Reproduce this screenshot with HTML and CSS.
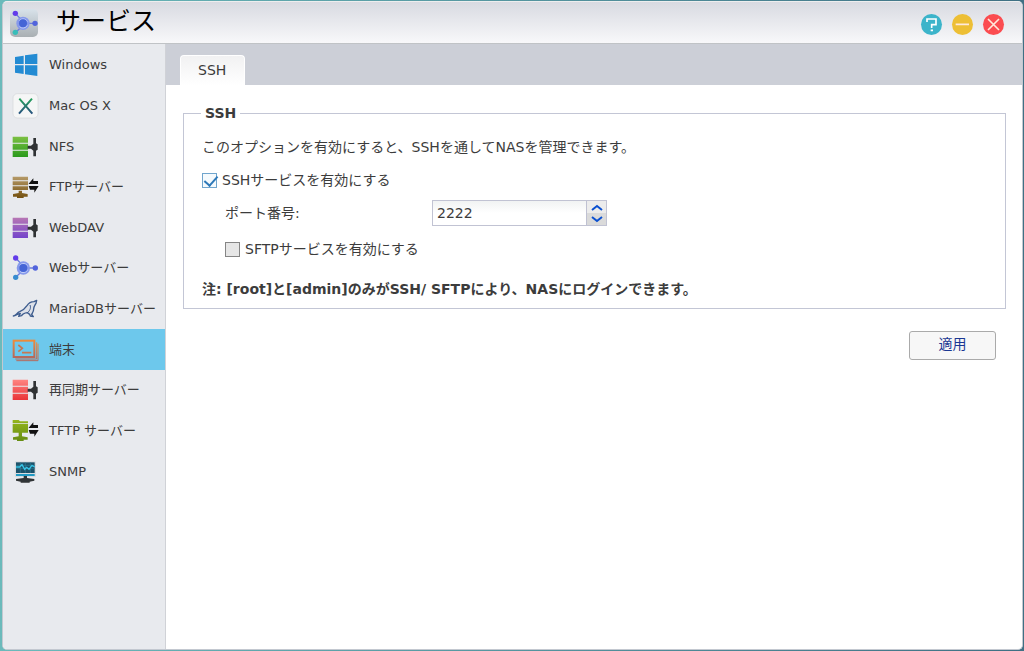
FILE: index.html
```html
<!DOCTYPE html>
<html lang="ja">
  <head>
    <meta charset="utf-8" />
    <meta name="viewport" content="width=device-width, initial-scale=1" />
    <title>サービス</title>
    <link rel="stylesheet" href="styles.css" />
  </head>
  <body>
    <!-- shared gradients and icon parts -->
    <svg class="defs" aria-hidden="true">
      <defs>
        <linearGradient id="green" x2="0" y2="1">
          <stop offset="0" stop-color="#7cc043" />
          <stop offset="1" stop-color="#2a9a1c" />
        </linearGradient>
        <linearGradient id="brown" x2="0" y2="1">
          <stop offset="0" stop-color="#b59a68" />
          <stop offset="1" stop-color="#74500f" />
        </linearGradient>
        <linearGradient id="purple" x2="0" y2="1">
          <stop offset="0" stop-color="#b777b4" />
          <stop offset="1" stop-color="#7444cb" />
        </linearGradient>
        <linearGradient id="red" x2="0" y2="1">
          <stop offset="0" stop-color="#ff8582" />
          <stop offset="1" stop-color="#e93438" />
        </linearGradient>
        <linearGradient id="olive" x2="0" y2="1">
          <stop offset="0" stop-color="#94b51c" />
          <stop offset="1" stop-color="#668d12" />
        </linearGradient>
        <linearGradient id="term" x2="0" y2="1">
          <stop offset="0" stop-color="#ee8b3a" />
          <stop offset="1" stop-color="#b5695c" />
        </linearGradient>
        <linearGradient id="osx" gradientUnits="userSpaceOnUse" x1="0" y1="18" x2="0" y2="62">
          <stop offset="0" stop-color="#25a05c" />
          <stop offset="1" stop-color="#27517f" />
        </linearGradient>
        <linearGradient id="tile" x2="0" y2="1">
          <stop offset="0" stop-color="#d8e2ea" />
          <stop offset="1" stop-color="#a9afb3" />
        </linearGradient>
        <symbol id="plug" viewBox="0 0 84 78">
          <path d="M50 35h10l7-6V12h8v16l5 3v16l-5 3v17h-8V50l-7-6H50z" fill="#2f3234" />
        </symbol>
        <symbol id="arrows" viewBox="0 0 84 78">
          <path d="M53 29l14-16v8h14v9H53zM53 36h30L70 56v-9H57z" fill="#111" />
        </symbol>
        <symbol id="hub" viewBox="0 0 84 78">
          <path d="M14 9l17 18M37 39h36M14 67l19-18" stroke="#6b7cdc" stroke-width="4" />
          <circle cx="37" cy="39" r="20" fill="#8699eb" />
          <path d="M26 31a14 14 0 0 1 24 3M50 44a14 14 0 0 1-23 5" stroke="#c3d0f8" stroke-width="3" fill="none" />
          <circle cx="37" cy="39" r="12" fill="#4565d6" />
          <circle cx="14" cy="9" r="8" fill="#623cea" />
          <circle cx="73" cy="39" r="8" fill="#5264dc" />
        </symbol>
      </defs>
    </svg>

    <div class="window">
      <header class="titlebar">
        <svg class="app-icon" viewBox="0 0 84 84" aria-hidden="true">
          <rect width="84" height="84" rx="15" fill="url(#tile)" />
          <use href="#hub" x="2" y="4" width="84" height="78" />
          <circle cx="16" cy="70" r="8" fill="#38bdb9" />
        </svg>
        <h1>サービス</h1>
        <div class="controls">
          <button type="button" class="control help" aria-label="ヘルプ">
            <svg viewBox="0 0 63 63"><path d="M18 24v-9h27v17H32v10M29 49h7" stroke-width="5" /></svg>
          </button>
          <button type="button" class="control minimize" aria-label="最小化">
            <svg viewBox="0 0 63 63"><path d="M11 31h40" stroke-width="5" /></svg>
          </button>
          <button type="button" class="control close" aria-label="閉じる">
            <svg viewBox="0 0 63 63"><path d="M15 15l33 33M48 15L15 48" stroke-width="5" /></svg>
          </button>
        </div>
      </header>

      <div class="body">
        <nav class="sidebar">
          <ul>
            <li><a href="#windows">
              <svg viewBox="0 0 84 78"><path d="M12 15l26-4v25H12zM42 10l37-5v31H42zM12 40h26v26l-26-4zM42 40h37v32l-37-5z" fill="#238bd3" /></svg>
              Windows</a></li>
            <li><a href="#mac">
              <svg viewBox="0 0 84 78">
                <rect x="6" y="2" width="75" height="73" rx="13" fill="#f5f6f6" stroke="#d5d6d9" stroke-width="2" />
                <path d="M25 17l39 45M63 17L24 62" stroke="url(#osx)" stroke-width="6" />
              </svg>
              Mac OS X</a></li>
            <li><a href="#nfs">
              <svg viewBox="0 0 84 78">
                <path d="M5 8h46v18H5zM5 29h46v18H5zM5 50h46v19H5z" fill="url(#green)" />
                <use href="#plug" />
              </svg>
              NFS</a></li>
            <li><a href="#ftp">
              <svg viewBox="0 0 84 78">
                <path d="M5 8h46v11H5zM5 22h46v12H5zM5 37h46v11H5zM23 50h10v7l17 3v8H38v4H18v-4H6v-8l17-3z" fill="url(#brown)" />
                <use href="#arrows" />
              </svg>
              FTPサーバー</a></li>
            <li><a href="#webdav">
              <svg viewBox="0 0 84 78">
                <path d="M5 8h46v18H5zM5 29h46v18H5zM5 50h46v19H5z" fill="url(#purple)" />
                <use href="#plug" />
              </svg>
              WebDAV</a></li>
            <li><a href="#web">
              <svg viewBox="0 0 84 78">
                <use href="#hub" />
                <circle cx="14" cy="67" r="8" fill="#388cd0" />
              </svg>
              Webサーバー</a></li>
            <li><a href="#mariadb">
              <svg viewBox="0 0 84 78" fill="none" stroke="#3d5c8e" stroke-width="4" stroke-linejoin="round">
                <path d="M7 60c9-1 10-10 19-13 11-4 16-9 22-18 5-8 13-12 21-12l8-4-2 9c-4 7-7 10-7 17 0 8-4 12-6 16l5 7-9-2-2-5-7-5c-8 1-14 3-17 9l-9 2 5-9c-9 1-13 8-21 8z" fill="#dde1e9" />
                <path d="M57 27c4 9-1 18-8 23" stroke-width="3" />
              </svg>
              MariaDBサーバー</a></li>
            <li class="selected"><a href="#terminal" aria-current="page">
              <svg viewBox="0 0 84 78" fill="none" stroke="url(#term)">
                <rect x="8" y="11" width="62" height="49" stroke-width="6" />
                <path d="M13 66h64V16M16 71h65V20" stroke-width="3" />
                <path d="M22 24l12 10-12 10M33 47h28" stroke-width="5" stroke="#c8774f" />
              </svg>
              端末</a></li>
            <li><a href="#rsync">
              <svg viewBox="0 0 84 78">
                <path d="M5 8h46v18H5zM5 29h46v18H5zM5 50h46v19H5z" fill="url(#red)" />
                <use href="#plug" />
              </svg>
              再同期サーバー</a></li>
            <li><a href="#tftp">
              <svg viewBox="0 0 84 78">
                <path d="M5 6h18l4 4h24v6H5zM5 18h46v26H5zM23 44h10v11l17 3v7H38v4H18v-4H6v-7l17-3z" fill="url(#olive)" />
                <use href="#arrows" />
              </svg>
              TFTP サーバー</a></li>
            <li><a href="#snmp">
              <svg viewBox="0 0 84 78">
                <rect x="11" y="7" width="64" height="47" rx="3" fill="#d9dcdf" />
                <path d="M15 10h56v32H15z" fill="#1d526a" />
                <path d="M15 19h56M15 29h56M28 10v32M43 10v32M58 10v32" stroke="#327b93" stroke-width="2" />
                <path d="M15 24h11l7-7 8 14 6-6 7 6 9-12 8 5" fill="none" stroke="#38c6e8" stroke-width="4" />
                <path d="M15 45h56v6H15z" fill="#219ac4" />
                <path d="M38 51h10v6l22 3v5l-14 3v3H29v-3l-14-3v-5l23-3z" fill="#303436" />
              </svg>
              SNMP</a></li>
          </ul>
        </nav>

        <main>
          <div class="tabs" role="tablist">
            <button type="button" class="tab" role="tab" aria-selected="true">SSH</button>
          </div>
          <form class="panel">
            <fieldset>
              <legend>SSH</legend>
              <p>このオプションを有効にすると、SSHを通してNASを管理できます。</p>
              <div class="row">
                <input type="checkbox" id="ssh" checked />
                <label for="ssh">SSHサービスを有効にする</label>
              </div>
              <div class="row indent port">
                <label for="port">ポート番号:</label>
                <div class="spinner">
                  <input type="text" inputmode="numeric" id="port" value="2222" />
                  <div class="steps">
                    <button type="button" aria-label="増やす">
                      <svg viewBox="0 0 12 7"><path d="M1 6l5-4 5 4" /></svg>
                    </button>
                    <button type="button" aria-label="減らす">
                      <svg viewBox="0 0 12 7"><path d="M1 1l5 4 5-4" /></svg>
                    </button>
                  </div>
                </div>
              </div>
              <div class="row indent">
                <input type="checkbox" id="sftp" />
                <label for="sftp">SFTPサービスを有効にする</label>
              </div>
              <p class="note">注: [root]と[admin]のみがSSH/ SFTPにより、NASにログインできます。</p>
            </fieldset>
            <div class="actions">
              <button type="button" class="apply">適用</button>
            </div>
          </form>
        </main>
      </div>
    </div>
  </body>
</html>
```
FILE: styles.css
```css
* {
  box-sizing: border-box;
}

body {
  margin: 0;
  padding: 1px 1px 1px 2px;
  height: 100vh;
  background: linear-gradient(to right, #6bbabb, #3f7084);
  color: #3c3c3c;
  font: 14px/20px "DejaVu Sans", "Noto Sans CJK JP", sans-serif;
}

button,
input {
  font: inherit;
  color: inherit;
  margin: 0;
}

.defs {
  position: absolute;
  width: 0;
  height: 0;
}

.window {
  display: flex;
  flex-direction: column;
  height: 100%;
  border: 1px solid #c3c8d0;
  border-top-color: #eee;
  border-radius: 5px;
  background: #fff;
  overflow: hidden;
}

/* title bar */
.titlebar {
  display: flex;
  align-items: center;
  flex: none;
  height: 42px;
  padding: 0 18px 0 7px;
  background: linear-gradient(#d8dae1, #f8f8fa);
  border-bottom: 1px solid #c0c3c6;
}

.app-icon {
  width: 28px;
  height: 28px;
}

h1 {
  margin: 0 auto 8px 18px;
  color: #000;
  font: 25px/32px "Noto Sans CJK JP", sans-serif;
}

.controls {
  display: flex;
  gap: 10px;
  margin-top: 4px;
}

.control {
  width: 21px;
  height: 21px;
  padding: 0;
  border: 0;
  border-radius: 50%;
}

.control svg {
  display: block;
  fill: none;
  stroke: #fff;
}

.help {
  background: #3cb4ca;
}

.minimize {
  background: #edbf35;
}

.close {
  background: #fb4c50;
}

.minimize svg,
.close svg {
  stroke: #ffe9dc;
}

.body {
  display: flex;
  flex: 1;
  min-height: 0;
}

/* service list */
.sidebar {
  flex: none;
  width: 163px;
  padding-top: 1px;
  background: #e8eaee;
  border-right: 1px solid #d0d2d7;
  font-size: 13px;
}

.sidebar ul {
  display: grid;
  grid-template-rows: repeat(11, 1fr);
  height: 447px;
  margin: 0;
  padding: 0;
  list-style: none;
}

.sidebar a {
  display: flex;
  align-items: center;
  gap: 10px;
  height: 100%;
  padding-left: 8px;
  color: inherit;
  text-decoration: none;
  white-space: nowrap;
}

.sidebar a svg {
  flex: none;
  width: 28px;
  height: 26px;
}

.sidebar .selected {
  background: #6dc8ec;
}

main {
  flex: 1;
  min-width: 0;
}

.tabs {
  display: flex;
  align-items: flex-end;
  height: 41px;
  padding-left: 14px;
  background: #cccfd7;
}

.tab {
  height: 30px;
  padding: 0 18px 1px 17px;
  border: 1px solid #fff;
  border-bottom: 0;
  border-radius: 4px 4px 0 0;
  background: linear-gradient(#f1f1f2, #fff);
}

/* settings form */
.panel {
  padding: 18px 16px 0 17px;
}

fieldset {
  margin: 0;
  padding: 14px 18px 9px;
  border: 1px solid #c3c6d5;
}

legend {
  margin-left: -1px;
  padding: 0 4px;
  font-weight: bold;
}

p {
  margin: 0;
}

.row {
  display: flex;
  align-items: center;
  gap: 5px;
  margin-top: 13px;
}

.indent {
  margin-left: 23px;
}

.port {
  margin-top: 10px;
}

.port label {
  width: 202px;
}

input[type="checkbox"] {
  appearance: none;
  width: 15px;
  height: 15px;
  border: 1px solid #858585;
  background: #e6e6e6;
}

input[type="checkbox"]:checked {
  border-color: #70a5cd;
  background: #f5fafd;
}

input[type="checkbox"]:checked::before {
  content: "";
  display: block;
  width: 6px;
  height: 11px;
  margin: -1px 0 0 4px;
  border: solid #2d78b8;
  border-width: 0 2px 2px 0;
  transform: rotate(42deg);
}

.spinner {
  display: flex;
  width: 175px;
  height: 26px;
  border: 1px solid #c1c3d3;
}

.spinner input {
  flex: 1;
  min-width: 0;
  padding: 0 4px;
  border: 0;
  background: linear-gradient(#f1f3f3, #fff 50%);
}

.steps {
  display: flex;
  flex-direction: column;
  width: 20px;
  border-left: 1px solid #bfc1d2;
}

.steps button {
  display: flex;
  flex: 1;
  align-items: center;
  justify-content: center;
  padding: 0;
  border: 0;
  background: #ececec;
}

.steps button + button {
  background: #dadada;
}

.steps svg {
  width: 12px;
  height: 7px;
  fill: none;
  stroke: #0b50d0;
  stroke-width: 2;
}

.note {
  margin-top: 20px;
  font-weight: bold;
}

.actions {
  display: flex;
  justify-content: flex-end;
  padding: 22px 10px 0 0;
}

.apply {
  width: 87px;
  height: 29px;
  padding: 0 0 3px;
  border: 1px solid #aaa;
  border-radius: 3px;
  background: #f7f7f7;
  color: #1b3793;
}
```
